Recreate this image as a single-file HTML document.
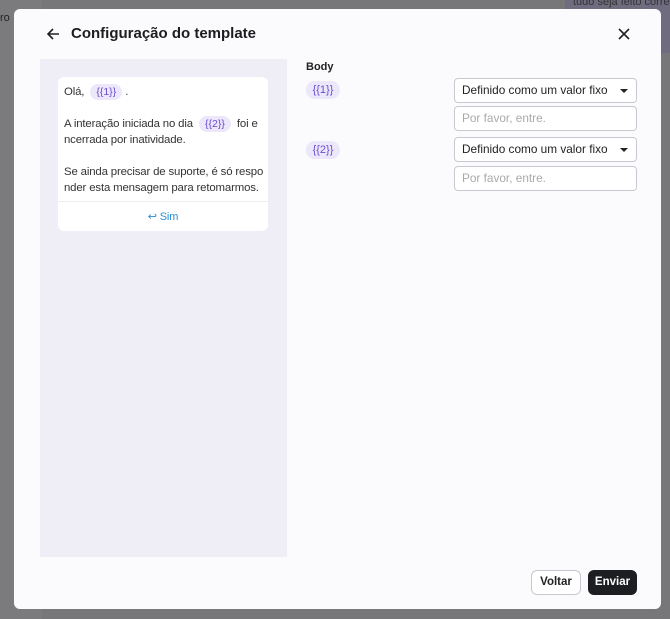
<!DOCTYPE html>
<html><head><meta charset="utf-8"><style>
*{box-sizing:border-box;margin:0;padding:0}
body{width:670px;height:619px;overflow:hidden;background:#777779;font-family:"Liberation Sans",sans-serif;position:relative}
.bg1{position:absolute;left:0;top:0;width:42px;height:619px;background:#7b7b7d}
.bgr{position:absolute;left:565px;top:0;width:105px;height:53px;background:#6f6c80}
.modal{position:absolute;left:14px;top:9px;width:647px;height:600px;background:#fbfbfd;border-radius:6px}
.title{position:absolute;left:57px;top:16px;font-size:15px;font-weight:bold;color:#1d1d21}
.back{position:absolute;left:32px;top:18px}
.close{position:absolute;left:604px;top:19px}
.prev{position:absolute;left:26px;top:50px;width:247px;height:498px;background:#efedf5}
.card{position:absolute;left:18px;top:18px;width:210px;height:154px;background:#fff;border-radius:6px;font-size:11.4px;color:#333;line-height:16px;white-space:nowrap;letter-spacing:-0.15px}
.card p{padding:0 6px}
.chip{display:inline-block;background:#ece7fb;color:#6a4fcf;border-radius:9px;padding:0 6px;font-size:10.5px;line-height:16px;letter-spacing:0}
.sim{position:absolute;left:0;right:0;top:124px;border-top:1px solid #eee;text-align:center;color:#2a8fd8;font-size:11px;padding-top:7px}
.lbl{position:absolute;font-size:11px;font-weight:bold;color:#222}
.rchip{position:absolute;left:292px;background:#ece7fb;color:#6a4fcf;border-radius:9px;width:34px;height:18px;font-size:11px;line-height:18px;text-align:center}
.sel,.inp{position:absolute;left:440px;width:183px;height:25px;border:1px solid #c8c8d0;border-radius:4px;font-size:11.8px;padding:0 7px;line-height:23px;color:#222;background:#fff;white-space:nowrap}
.inp{color:#aaa}
.sel:after{content:"";position:absolute;right:8px;top:10px;border:4px solid transparent;border-top:4px solid #222;border-bottom:0}
.btn{position:absolute;top:561px;height:25px;border-radius:6px;font-size:11.5px;font-weight:bold;text-align:center;line-height:23px}
</style></head><body>
<div class="bg1"></div><div class="bgr"></div>
<div style="position:absolute;left:0;top:12px;font-size:11px;color:#222">ro</div>
<div style="position:absolute;left:573px;top:-4px;font-size:11px;color:#333">tudo seja feito corre</div>
<div class="modal">
<svg class="back" width="14" height="14" viewBox="0 0 14 14"><path d="M13 7H2M7 2L2 7l5 5" stroke="#222" stroke-width="1.6" fill="none"/></svg>
<div class="title">Configuração do template</div>
<svg class="close" width="12" height="12" viewBox="0 0 12 12"><path d="M1 1l10 10M11 1L1 11" stroke="#222" stroke-width="1.6"/></svg>
<div class="prev"><div class="card">
<p style="padding-top:7px">Olá, &nbsp;<span class="chip">{{1}}</span> .</p>
<p style="margin-top:16px">A interação iniciada no dia &nbsp;<span class="chip">{{2}}</span>&nbsp; foi e<br>ncerrada por inatividade.</p>
<p style="margin-top:16px">Se ainda precisar de suporte, é só respo<br>nder esta mensagem para retomarmos.</p>
<div class="sim">&#x21A9;&#xFE0E; Sim</div>
</div></div>
<div class="lbl" style="left:292px;top:52px">Body</div>
<div class="rchip" style="top:72px">{{1}}</div>
<div class="rchip" style="top:132px">{{2}}</div>
<div class="sel" style="top:69px">Definido como um valor fixo</div>
<div class="inp" style="top:97px">Por favor, entre.</div>
<div class="sel" style="top:128px">Definido como um valor fixo</div>
<div class="inp" style="top:157px">Por favor, entre.</div>
<div class="btn" style="left:517px;width:50px;border:1px solid #c8c8d2;color:#222;background:#fff">Voltar</div>
<div class="btn" style="left:574px;width:49px;background:#1d1e22;color:#fff;line-height:25px">Enviar</div>
</div>
</body></html>
